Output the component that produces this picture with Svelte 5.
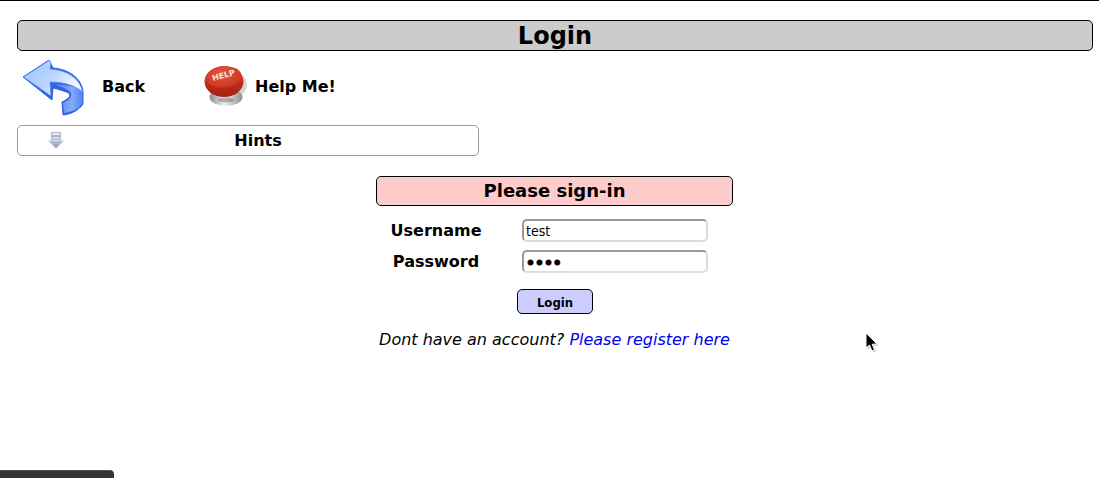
<script>
  let username = 'test';
  let password = 'test';
</script>

<div class="page">
  <h1 class="title">Login</h1>

  <nav class="toolbar">
    <a class="tool back" href="#back">
      <svg width="64" height="58" viewBox="0 0 64 58">
        <defs>
          <linearGradient id="bfront" x1="0" y1="0" x2="1" y2="0.5">
            <stop offset="0" stop-color="#9cc3ff"/>
            <stop offset="0.6" stop-color="#bcd6ff"/>
            <stop offset="1" stop-color="#f4f8ff"/>
          </linearGradient>
          <linearGradient id="bside" x1="0" y1="0" x2="1" y2="0">
            <stop offset="0" stop-color="#4577f0"/>
            <stop offset="0.65" stop-color="#86abfb"/>
            <stop offset="1" stop-color="#5584f2"/>
          </linearGradient>
        </defs>
        <path d="M1 19 L27 2 L31 10 C46 11 60 20 61 34 L61 46 C57 52 50 56 41 57 L40 44 C44 42 47 40 48 38 L47 35 C42 33 36 31 31 30 L30 42 Z" fill="#2f62e4" stroke="#2f62e4" stroke-width="1" stroke-linejoin="round"/>
        <path d="M30 26 C42 27 58 28 60.5 34 L60.5 45 C57 51 50 54 42 55 L41 45 C47 42 50 39 49 35 C46 31 38 28 30 26 Z" fill="url(#bside)"/>
        <path d="M1.5 19 L27 2.5 L29 4 L28 11 C45 12 58 20 60.5 34 C54 28 43 24 28 24 L29 38 Z" fill="url(#bfront)" stroke="#5c88f0" stroke-width="0.8" stroke-linejoin="round"/>
      </svg>
      <span class="back-label">Back</span>
    </a>
    <a class="tool help" href="#help">
      <svg width="44" height="44" viewBox="0 0 44 44">
        <defs>
          <linearGradient id="hbase" x1="0" y1="0" x2="1" y2="0">
            <stop offset="0" stop-color="#8a8a8a"/>
            <stop offset="0.45" stop-color="#f2f2f2"/>
            <stop offset="1" stop-color="#8e8e8e"/>
          </linearGradient>
          <linearGradient id="hbody" x1="0" y1="0" x2="0" y2="1">
            <stop offset="0" stop-color="#d9442e"/>
            <stop offset="1" stop-color="#a51d10"/>
          </linearGradient>
          <radialGradient id="htop" cx="0.45" cy="0.35" r="0.7">
            <stop offset="0" stop-color="#e4573f"/>
            <stop offset="1" stop-color="#c93421"/>
          </radialGradient>
        </defs>
        <ellipse cx="23" cy="20" rx="20" ry="15" fill="#000" opacity=".16"/>
        <ellipse cx="22" cy="32" rx="16.5" ry="9" fill="url(#hbase)"/>
        <ellipse cx="22" cy="35" rx="8" ry="2.6" fill="#666" opacity=".45"/>
        <ellipse cx="20" cy="16.5" rx="19.5" ry="15.5" fill="url(#hbody)"/>
        <ellipse cx="20" cy="12" rx="17.5" ry="10.5" fill="url(#htop)" transform="rotate(-6 20 12)"/>
        <text x="19.5" y="13" transform="rotate(-15 19.5 10)" class="help-word">HELP</text>
      </svg>
      <span class="help-label">Help Me!</span>
    </a>
  </nav>

  <div class="hints">
    <svg class="hints-icon" width="16" height="17" viewBox="0 0 16 17">
      <defs>
        <linearGradient id="harrow" x1="0" y1="0" x2="0" y2="1">
          <stop offset="0" stop-color="#b8c6da"/>
          <stop offset="1" stop-color="#8c9db6"/>
        </linearGradient>
      </defs>
      <rect x="3.5" y="0.5" width="9" height="3" fill="#e6ebf3" stroke="#a9b8cd"/>
      <rect x="3.5" y="4.5" width="9" height="3" fill="#d3dce9" stroke="#a9b8cd"/>
      <path d="M0 8.5 H16 L8 16.5 Z" fill="url(#harrow)"/>
    </svg>
    <span class="hints-label">Hints</span>
  </div>

  <section class="signin">
    <h2 class="signin-title">Please sign-in</h2>
    <form class="form">
      <label class="row">
        <span class="label">Username</span>
        <input class="input" type="text" bind:value={username} />
      </label>
      <label class="row">
        <span class="label">Password</span>
        <input class="input secret" type="password" bind:value={password} />
      </label>
      <button class="submit" type="button">Login</button>
    </form>
    <p class="register">Dont have an account? <a href="#register">Please register here</a></p>
  </section>

  <svg class="cursor" width="16" height="22" viewBox="0 0 16 22">
    <path d="M2.5 2 L2.5 17.5 L6 14.5 L8.5 20.5 L11 19.5 L8.7 13.7 L13.5 13.5 Z" fill="#999" opacity=".5"/>
    <path d="M1 1 L1 16 L4.5 13 L7 19 L9.5 18 L7.2 12.2 L12 12 Z" fill="#000" stroke="#fff" stroke-width="1"/>
  </svg>
  <div class="dock"></div>
</div>

<style>
  :global(body) {
    margin: 0;
    background: #fff;
  }
  .page {
    position: relative;
    box-sizing: border-box;
    height: 478px;
    overflow: hidden;
    border-top: 1px solid #000;
    padding: 19px 6px 0 17px;
    font-family: "DejaVu Sans", sans-serif;
    color: #000;
  }
  .title {
    box-sizing: border-box;
    height: 31px;
    margin: 0;
    border: 1px solid #000;
    border-radius: 5px;
    background: #ccc;
    font-size: 24px;
    line-height: 30px;
    font-weight: bold;
    text-align: center;
  }
  .toolbar {
    display: flex;
    height: 58px;
    margin-top: 7px;
    padding-left: 5px;
  }
  .tool {
    display: flex;
    align-items: center;
    color: #000;
    text-decoration: none;
    font-size: 16px;
    font-weight: bold;
  }
  .back-label {
    width: 102px;
    margin-left: 16px;
    position: relative;
    top: -1px;
  }
  .help-label {
    margin-left: 7px;
    position: relative;
    top: -1px;
  }
  .help-word {
    font-family: "DejaVu Sans", sans-serif;
    font-size: 8px;
    font-weight: bold;
    fill: #f8e2dc;
    text-anchor: middle;
  }
  .hints {
    display: flex;
    align-items: center;
    box-sizing: border-box;
    width: 462px;
    height: 31px;
    margin-top: 9px;
    padding-left: 30px;
    border: 1px solid #999;
    border-radius: 5px;
  }
  .hints-icon {
    flex: none;
  }
  .hints-label {
    flex: 1;
    text-align: center;
    margin-right: 26px;
    font-size: 16px;
    font-weight: bold;
  }
  .signin {
    width: 357px;
    margin: 20px 0 0 359px;
  }
  .signin-title {
    box-sizing: border-box;
    height: 30px;
    margin: 0;
    border: 1px solid #000;
    border-radius: 5px;
    background: #fcc;
    font-size: 18px;
    line-height: 28px;
    font-weight: bold;
    text-align: center;
  }
  .form {
    display: flex;
    flex-direction: column;
    margin-top: 13px;
  }
  .row {
    display: flex;
    align-items: center;
    height: 23px;
    margin-bottom: 8px;
  }
  .label {
    width: 120px;
    text-align: center;
    font-size: 16px;
    font-weight: bold;
  }
  .input {
    box-sizing: border-box;
    width: 186px;
    height: 23px;
    margin-left: 26px;
    padding: 1px 2px 0;
    border: 2px solid;
    border-color: #999 #ddd #ddd #999;
    border-radius: 5px;
    background: #fff;
    color: #000;
    font-family: "DejaVu Sans Condensed", "DejaVu Sans", sans-serif;
    font-stretch: condensed;
    font-size: 14px;
    outline: none;
  }
  .secret {
    padding-top: 2px;
    font-family: "DejaVu Sans", sans-serif;
    font-stretch: normal;
    font-weight: bold;
    -webkit-text-stroke: 1px #000;
  }
  .submit {
    box-sizing: border-box;
    width: 76px;
    height: 25px;
    margin: 8px 0 0 141px;
    padding: 2px 0 0;
    border: 1px solid #000;
    border-radius: 5px;
    background: #ccf;
    color: #000;
    font-family: "DejaVu Sans Condensed", "DejaVu Sans", sans-serif;
    font-stretch: condensed;
    font-size: 13px;
    font-weight: bold;
  }
  .register {
    margin: 16px 0 0;
    text-align: center;
    font-size: 16px;
    font-style: italic;
    white-space: nowrap;
  }
  .register a {
    color: #00e;
    text-decoration: none;
  }
  .cursor {
    position: absolute;
    left: 865px;
    top: 331px;
  }
  .dock {
    position: absolute;
    left: 0;
    top: 469px;
    width: 114px;
    height: 20px;
    border-radius: 0 4px 0 0;
    background: #333;
    border-top: 1px solid #555;
  }
</style>
